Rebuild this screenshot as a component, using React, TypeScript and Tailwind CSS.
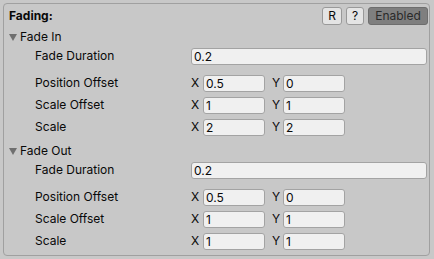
import React from "react";

const font = { fontFamily: "Inter, 'Noto Sans', sans-serif" };

function Field({ value, className = "" }: { value: string; className?: string }) {
  return (
    <div
      className={`h-[17px] rounded-[3px] border border-[#a3a3a3] bg-[#f0f0f0] pl-[2px] text-[12px] leading-[15px] text-[#090909] ${className}`}
    >
      {value}
    </div>
  );
}

function Header({ label }: { label: string }) {
  return (
    <div className="flex h-[18px] items-center pl-[5px]">
      <svg width="8" height="7" viewBox="0 0 8 7" className="mr-[3px]">
        <polygon points="0,0 8,0 4,7" fill="#6f6f6f" />
      </svg>
      <span className="text-[12px] text-[#090909]">{label}</span>
    </div>
  );
}

function DurationRow() {
  return (
    <div className="flex h-[20px] items-center">
      <span className="w-[187px] pl-[31px] text-[12px] text-[#090909]">Fade Duration</span>
      <Field value="0.2" className="w-[236px]" />
    </div>
  );
}

function VecRow({ label, x, y }: { label: string; x: string; y: string }) {
  return (
    <div className="flex h-[22px] items-center">
      <span className="w-[187px] pl-[31px] text-[12px] text-[#090909]">{label}</span>
      <span className="w-[12px] text-[12px] text-[#090909]">X</span>
      <Field value={x} className="w-[62px]" />
      <span className="ml-[7px] w-[11px] text-[12px] text-[#090909]">Y</span>
      <Field value={y} className="w-[62px]" />
    </div>
  );
}

function Section({ title, scale }: { title: string; scale: string }) {
  return (
    <div className="flex flex-col">
      <Header label={title} />
      <DurationRow />
      <div className="mt-[6px] flex flex-col">
        <VecRow label="Position Offset" x="0.5" y="0" />
        <VecRow label="Scale Offset" x="1" y="1" />
        <VecRow label="Scale" x={scale} y={scale} />
      </div>
    </div>
  );
}

export default function App() {
  return (
    <div className="h-[259px] w-[434px] bg-[#c8c8c8] p-[3px]" style={font}>
      <div className="flex h-[253px] w-[427px] flex-col rounded-[4px] border border-[#a0a0a0] bg-[#c8c8c8]">
        <div className="flex h-[24px] items-center pr-[1px]">
          <span className="flex-1 pl-[5px] text-[12px] font-bold text-[#090909]">Fading:</span>
          <div className="flex h-[18px] w-[20px] items-center justify-center rounded-[3px] border border-[#999] bg-[#e4e4e4] text-[12px] text-[#090909]">
            R
          </div>
          <div className="ml-[4px] flex h-[18px] w-[18px] items-center justify-center rounded-[3px] border border-[#999] bg-[#e4e4e4] text-[12px] text-[#090909]">
            ?
          </div>
          <div className="ml-[4px] flex h-[18px] w-[60px] items-center justify-center rounded-[3px] border border-[#6e6e6e] bg-[#7f7f7f] text-[12px] text-[#2a2a2a]">
            Enabled
          </div>
        </div>
        <Section title="Fade In" scale="2" />
        <div className="mt-[4px]">
          <Section title="Fade Out" scale="1" />
        </div>
      </div>
    </div>
  );
}
